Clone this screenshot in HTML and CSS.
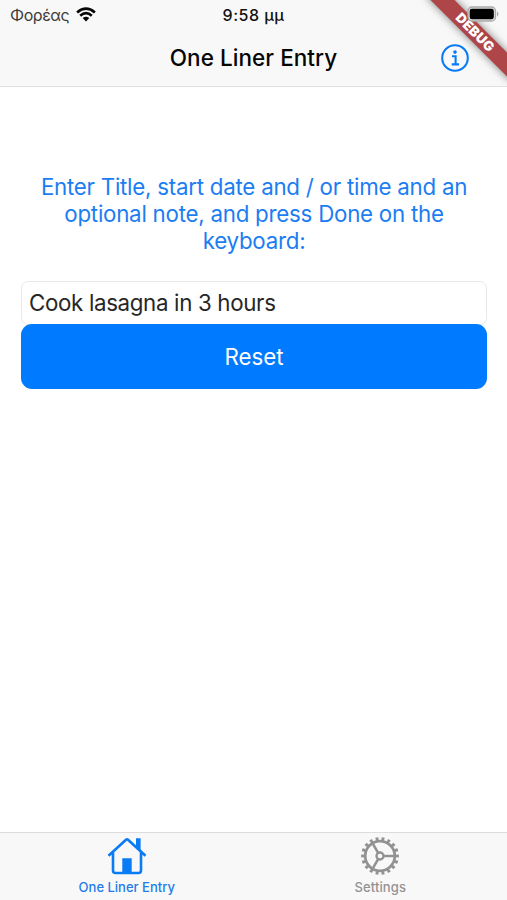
FILE: index.html
```html
<!DOCTYPE html>
<html lang="en">
<head>
<meta charset="utf-8">
<meta name="viewport" content="width=device-width">
<title>One Liner Entry</title>
<link rel="stylesheet" href="styles.css">
</head>
<body>
<div class="app">
  <header class="header">
    <div class="status">
      <div class="carrier"><span class="carrier-name" lang="el">Φορέας</span>
        <svg class="wifi" width="20" height="15" viewBox="0 0 20 15" fill="none" stroke="#080808" stroke-width="2.7"><path d="M1.1 5.5Q10-2.1 18.9 5.5M4.2 8.7Q10 3.7 15.8 8.7"/><path d="M6.7 11.1Q10 8.5 13.3 11.1L10 14.5Z" fill="#080808" stroke="none"/></svg>
      </div>
      <span class="clock" lang="el">9:58 μμ</span>
      <svg class="battery" width="33" height="17" viewBox="0 0 33 17"><rect x="1" y="1" width="27.5" height="14" rx="4" fill="#dedede" stroke="#aaa" stroke-width="1.3"/><rect x="2.7" y="2.7" width="24.1" height="10.6" rx="2.3" fill="#000"/><path d="M30 5.5Q33 8 30 10.5Z" fill="#aaa"/></svg>
    </div>
    <div class="navbar">
      <h1 class="title">One Liner Entry</h1>
      <svg class="info" width="28" height="28" viewBox="0 0 28 28" fill="none" stroke="#087bf5"><circle cx="14" cy="14" r="12.8" stroke-width="2.1"/><circle cx="14" cy="8.1" r="1.8" fill="#087bf5" stroke="none"/><path d="M11 12.2H14.6V20.4M10.7 20.4H18" stroke-width="2.1"/></svg>
    </div>
    <div class="ribbon"><span class="ribbon-text">DEBUG</span></div>
  </header>
  <main class="content">
    <p class="prompt"><span class="line">Enter Title, start date and / or time and an</span><span class="line">optional note, and press Done on the</span><span class="line">keyboard:</span></p>
    <div class="field"><span class="field-text">Cook lasagna in 3 hours</span></div>
    <button class="reset">Reset</button>
  </main>
  <nav class="tabs">
    <div class="tab active">
      <svg width="40" height="38" viewBox="0 0 40 38" fill="none" stroke="#087bf5" stroke-width="2.6" stroke-linejoin="round"><path d="M1.5 18.7L19 2.7Q20 1.8 21 2.7L38.5 18.7M6 15V33.5Q6 36 8.5 36H31.5Q34 36 34 33.5V15"/><path d="M29 1.2H33.6V14L29 9.8ZM15.3 21.2H24.7V36H15.3Z" fill="#087bf5" stroke="none"/></svg>
      <span class="tab-label">One Liner Entry</span>
    </div>
    <div class="tab settings">
      <svg width="40" height="38" viewBox="0 0 40 38" fill="none" stroke="#929292"><circle cx="20" cy="19" r="17" stroke-width="3.8" pathLength="180" stroke-dasharray="4.8 5.2" stroke-dashoffset="2.4"/><circle cx="20" cy="19" r="14.8" stroke-width="2.7"/><circle cx="20" cy="19" r="3.5" stroke-width="2.3"/><path d="M23.5 19H35M18.2 16L12.5 6.2M18.2 22L12.5 31.8" stroke-width="2.5"/></svg>
      <span class="tab-label">Settings</span>
    </div>
  </nav>
</div>
</body>
</html>
```
FILE: styles.css
```css
* { box-sizing: border-box; }
body { margin: 0; font-family: Inter, "Liberation Sans", sans-serif; background: #fff; }
.app { width: 507px; height: 900px; display: flex; flex-direction: column; overflow: hidden; }
.header { position: relative; height: 87px; flex: none; background: #f8f8f8; border-bottom: 1px solid #e0e0e0; overflow: hidden; }
.status { position: relative; z-index: 2; height: 29px; display: grid; grid-template-columns: 1fr auto 1fr; align-items: center; padding: 0 7px 0 10px; }
.carrier { display: flex; align-items: center; gap: 7px; }
.carrier-name { font-size: 16px; line-height: 20px; letter-spacing: -.45px; color: #3c3c3c; }
.clock { font-size: 16px; font-weight: 500; line-height: 20px; letter-spacing: .5px; margin-right: 3px; color: #111; }
.battery { justify-self: end; }
.navbar { height: 57px; display: grid; grid-template-columns: 1fr auto 1fr; align-items: center; padding: 0 38px; }
.title { grid-column: 2; margin: 0; font-size: 22.5px; font-weight: 500; color: #050505; white-space: nowrap; letter-spacing: .05px; }
.info { justify-self: end; }
.ribbon { position: absolute; z-index: 1; left: 415px; top: 24px; width: 120px; height: 17px; display: flex; align-items: center; justify-content: center; transform: rotate(45deg); background: #ae4549; box-shadow: 0 0 8px rgba(0,0,0,.5); }
.ribbon-text { color: #fff; font-size: 13.5px; font-weight: 900; line-height: 17px; letter-spacing: .3px; }
.content { flex: 1; padding: 86px 20px 0 21px; }
.prompt { margin: 0 0 27px; text-align: center; color: #1c7df2; font-size: 22.3px; line-height: 27px; letter-spacing: -.24px; }
.line { display: block; white-space: nowrap; }
.field { height: 44px; display: flex; align-items: center; padding: 0 0 1px 7px; border: 1.5px solid #e8e8e8; border-radius: 7px; color: #272727; font-size: 22.3px; letter-spacing: -.33px; }
.reset { position: relative; display: block; width: 100%; height: 65px; margin-top: -1px; padding: 0; border: 0; border-radius: 11px; background: #007aff; color: #fff; font: 22.3px Inter, sans-serif; }
.tabs { height: 68px; flex: none; display: grid; grid-template-columns: 1fr 1fr; background: #f8f8f8; border-top: 1px solid #dcdcdc; }
.tab { display: flex; flex-direction: column; align-items: center; padding-top: 4px; color: #929292; }
.tab-label { margin-top: 4px; font-size: 13px; font-weight: 500; line-height: 16px; }
.active { color: #237ce9; }
.settings .tab-label { letter-spacing: .12px; }
```
